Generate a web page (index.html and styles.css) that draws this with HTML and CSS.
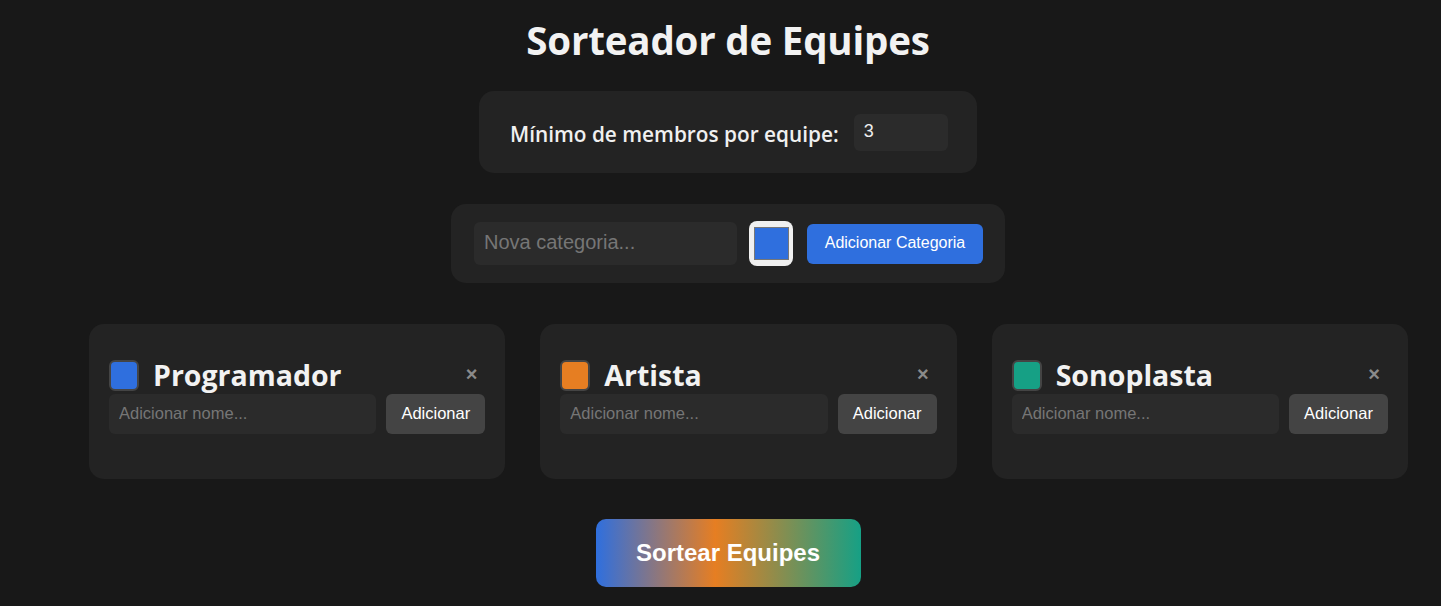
FILE: index.html
```html
<!DOCTYPE html>
<html lang="pt-BR">
<head>
<meta charset="utf-8">
<title>Sorteador de Equipes</title>
<link rel="stylesheet" href="styles.css">
</head>
<body>
<div class="page">
  <h1 class="title">Sorteador de Equipes</h1>

  <div class="settings">
    <label class="settings-label" for="min">Mínimo de membros por equipe:</label>
    <input class="settings-input" id="min" type="text" value="3">
  </div>

  <div class="add-cat">
    <input class="cat-input" type="text" placeholder="Nova categoria...">
    <div class="color-pick"><span class="color-swatch"></span></div>
    <button class="btn-primary">Adicionar Categoria</button>
  </div>

  <div class="cards">
    <div class="card">
      <div class="card-head">
        <span class="swatch swatch-blue"></span>
        <h3 class="card-title">Programador</h3>
        <span class="close">×</span>
      </div>
      <div class="card-row">
        <input class="name-input" type="text" placeholder="Adicionar nome...">
        <button class="btn-add">Adicionar</button>
      </div>
    </div>
    <div class="card">
      <div class="card-head">
        <span class="swatch swatch-orange"></span>
        <h3 class="card-title">Artista</h3>
        <span class="close">×</span>
      </div>
      <div class="card-row">
        <input class="name-input" type="text" placeholder="Adicionar nome...">
        <button class="btn-add">Adicionar</button>
      </div>
    </div>
    <div class="card">
      <div class="card-head">
        <span class="swatch swatch-teal"></span>
        <h3 class="card-title">Sonoplasta</h3>
        <span class="close">×</span>
      </div>
      <div class="card-row">
        <input class="name-input" type="text" placeholder="Adicionar nome...">
        <button class="btn-add">Adicionar</button>
      </div>
    </div>
  </div>

  <div class="sort-wrap">
    <button class="btn-sort">Sortear Equipes</button>
  </div>
</div>
</body>
</html>
```

FILE: styles.css
```css
* { box-sizing: border-box; }
html, body { margin: 0; padding: 0; }
body {
  background: #181818;
  color: #f0f0f0;
  font-family: "Open Sans", "Noto Sans", sans-serif;
  overflow: hidden;
}
.page {
  padding-left: 15px;
  display: flex;
  flex-direction: column;
  align-items: center;
}
.title {
  margin: 14px 0 0;
  height: 77px;
  font-size: 38.5px;
  line-height: 52px;
  font-weight: 700;
  color: #f2f2f2;
  letter-spacing: -0.2px;
}
.settings {
  width: 498px;
  height: 82px;
  background: #232323;
  border-radius: 15px;
  display: flex;
  align-items: center;
  padding: 0 30px 0 31px;
  gap: 15px;
}
.settings-label {
  font-size: 20.8px;
  font-weight: 600;
  color: #f0f0f0;
  white-space: nowrap;
  flex: 1;
  margin-top: 4px;
}
.settings-input {
  width: 94px;
  height: 37px;
  border: none;
  border-radius: 6px;
  background: #2b2b2b;
  color: #eee;
  font-family: "Liberation Sans", Arial, sans-serif;
  font-size: 18px;
  padding: 0 10px 2px;
  margin-bottom: 0;
  outline: none;
}
.add-cat {
  margin-top: 31px;
  width: 554px;
  height: 79px;
  background: #232323;
  border-radius: 15px;
  display: flex;
  align-items: center;
  padding: 0 22px 0 23px;
}
.cat-input {
  width: 263px;
  height: 43px;
  border: none;
  border-radius: 6px;
  background: #2b2b2b;
  color: #eee;
  font-family: "Liberation Sans", Arial, sans-serif;
  font-size: 20px;
  padding: 0 10px 2px;
  outline: none;
}
.cat-input::placeholder, .name-input::placeholder { color: #767676; }
.color-pick {
  margin-left: 12px;
  width: 44px;
  height: 45px;
  background: #f0f0f0;
  border-radius: 8px;
  display: flex;
  align-items: center;
  justify-content: center;
}
.color-swatch {
  width: 35px;
  height: 33px;
  background: #2f6fde;
  border: 1.5px solid #777;
}
.btn-primary {
  margin-left: 14px;
  width: 176px;
  height: 40px;
  border: none;
  border-radius: 6px;
  background: #2f6fde;
  color: #fff;
  font-family: "Liberation Sans", Arial, sans-serif;
  font-size: 16px;
  padding: 0 0 2px;
}
.cards {
  margin-top: 41px;
  align-self: stretch;
  display: grid;
  grid-template-columns: repeat(3, 1fr);
  gap: 35px;
  padding: 0 33px 0 74px;
}
.card {
  height: 155px;
  background: #232323;
  border-radius: 15px;
  padding: 33px 20px 20px;
}
.card-head {
  display: flex;
  align-items: center;
  height: 37px;
}
.swatch {
  width: 30px;
  height: 31px;
  border-radius: 6px;
  border: 2px solid #444;
  margin-right: 14px;
  flex: none;
}
.swatch-blue { background: #2f6fde; }
.swatch-orange { background: #e67e22; }
.swatch-teal { background: #16a085; }
.card-title {
  margin: 0;
  flex: 1;
  font-size: 28.5px;
  font-weight: 700;
  line-height: 37px;
  padding-top: 0;
  color: #f2f2f2;
}
.close {
  color: #8a8a8a;
  font-family: "Liberation Sans", Arial, sans-serif;
  font-size: 20px;
  font-weight: 700;
  margin-right: 8px;
  margin-top: -2px;
}
.card-row {
  display: flex;
  gap: 10px;
  margin-top: 0;
}
.name-input {
  flex: 1;
  min-width: 0;
  height: 40px;
  border: none;
  border-radius: 6px;
  background: #2b2b2b;
  color: #eee;
  font-family: "Liberation Sans", Arial, sans-serif;
  font-size: 16.5px;
  padding: 0 10px 2px;
  outline: none;
}
.btn-add {
  width: 99px;
  height: 40px;
  border: none;
  border-radius: 6px;
  background: #444;
  color: #fff;
  font-family: "Liberation Sans", Arial, sans-serif;
  font-size: 16.5px;
  padding: 0 0 2px;
}
.sort-wrap {
  margin-top: 40px;
}
.btn-sort {
  width: 265px;
  height: 68px;
  border: none;
  border-radius: 10px;
  background: linear-gradient(90deg, #2f6fde 0%, #e67e22 45%, #16a085 100%);
  color: #fff;
  font-family: "Liberation Sans", Arial, sans-serif;
  font-size: 24px;
  font-weight: 700;
}
```
